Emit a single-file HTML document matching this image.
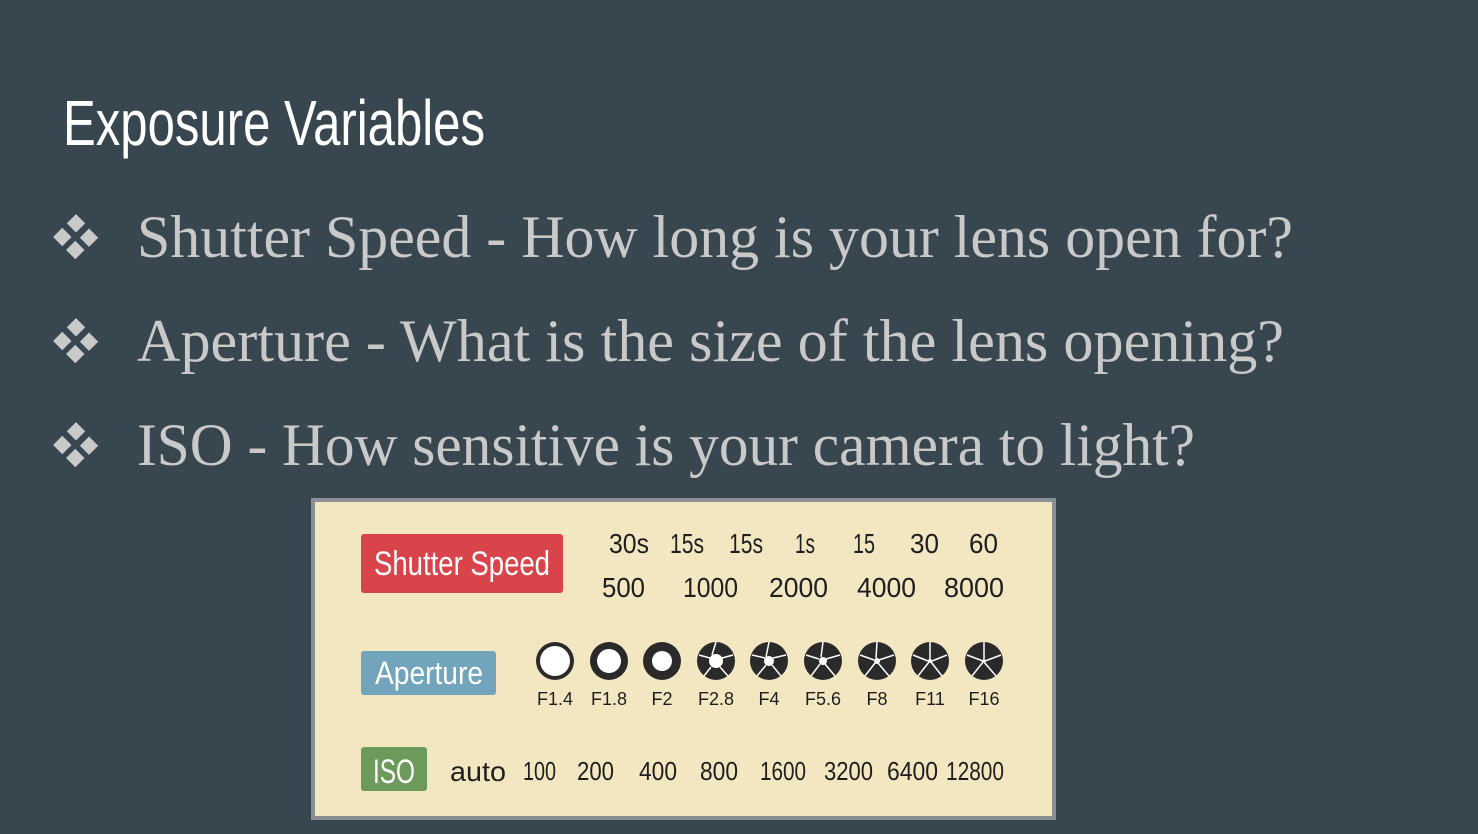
<!DOCTYPE html>
<html><head><meta charset="utf-8"><style>
body{margin:0;width:1478px;height:834px;background:#37464f;overflow:hidden;position:relative;font-family:"Liberation Sans",sans-serif}
.box{position:absolute;left:311px;top:498px;width:737px;height:314px;background:#f3e7c1;border:4px solid #8a8f91}
</style></head><body>
<svg width="1478" height="834" style="position:absolute;left:0;top:0">
<text x="63" y="145" font-family="Liberation Sans" font-size="64" fill="#fff" textLength="422" lengthAdjust="spacingAndGlyphs">Exposure Variables</text>
<g fill="#c9c9c9">
<g transform="translate(76,237)"><rect x="-7" y="-20" width="13" height="13" transform="rotate(45 0 -13)"/><rect x="-7" y="7" width="13" height="13" transform="rotate(45 0 13)"/><rect x="-20" y="-6" width="13" height="13" transform="rotate(45 -13 0)"/><rect x="7" y="-6" width="13" height="13" transform="rotate(45 13 0)"/></g>
<g transform="translate(76,341)"><rect x="-7" y="-20" width="13" height="13" transform="rotate(45 0 -13)"/><rect x="-7" y="7" width="13" height="13" transform="rotate(45 0 13)"/><rect x="-20" y="-6" width="13" height="13" transform="rotate(45 -13 0)"/><rect x="7" y="-6" width="13" height="13" transform="rotate(45 13 0)"/></g>
<g transform="translate(76,445)"><rect x="-7" y="-20" width="13" height="13" transform="rotate(45 0 -13)"/><rect x="-7" y="7" width="13" height="13" transform="rotate(45 0 13)"/><rect x="-20" y="-6" width="13" height="13" transform="rotate(45 -13 0)"/><rect x="7" y="-6" width="13" height="13" transform="rotate(45 13 0)"/></g>
<g font-family="Liberation Serif" font-size="60">
<text x="137" y="257" textLength="1156" lengthAdjust="spacingAndGlyphs">Shutter Speed - How long is your lens open for?</text>
<text x="137" y="361" textLength="1147" lengthAdjust="spacingAndGlyphs">Aperture - What is the size of the lens opening?</text>
<text x="137" y="465" textLength="1058" lengthAdjust="spacingAndGlyphs">ISO - How sensitive is your camera to light?</text>
</g></g>
</svg>
<div class="box"></div>
<svg width="1478" height="834" style="position:absolute;left:0;top:0">
<rect x="361" y="534" width="202" height="59" rx="3" fill="#d8444a"/>
<text x="374" y="575" font-family="Liberation Sans" font-size="34" fill="#fff" textLength="176" lengthAdjust="spacingAndGlyphs">Shutter Speed</text>
<rect x="361" y="651" width="135" height="44" rx="3" fill="#72a4bb"/>
<text x="375" y="684" font-family="Liberation Sans" font-size="32" fill="#fff" textLength="108" lengthAdjust="spacingAndGlyphs">Aperture</text>
<rect x="361" y="747" width="66" height="44" rx="3" fill="#6c9a5a"/>
<text x="373" y="783" font-family="Liberation Sans" font-size="34" fill="#fff" textLength="42" lengthAdjust="spacingAndGlyphs">ISO</text>
<g font-family="Liberation Sans" fill="#1e1e1e" font-size="28">
<text x="609" y="553" textLength="40" lengthAdjust="spacingAndGlyphs">30s</text>
<text x="670" y="553" textLength="34" lengthAdjust="spacingAndGlyphs">15s</text>
<text x="729" y="553" textLength="34" lengthAdjust="spacingAndGlyphs">15s</text>
<text x="795" y="553" textLength="20" lengthAdjust="spacingAndGlyphs">1s</text>
<text x="853" y="553" textLength="22" lengthAdjust="spacingAndGlyphs">15</text>
<text x="910" y="553" textLength="29" lengthAdjust="spacingAndGlyphs">30</text>
<text x="969" y="553" textLength="29" lengthAdjust="spacingAndGlyphs">60</text>
<text x="602" y="597" textLength="43" lengthAdjust="spacingAndGlyphs">500</text>
<text x="683" y="597" textLength="55" lengthAdjust="spacingAndGlyphs">1000</text>
<text x="769" y="597" textLength="59" lengthAdjust="spacingAndGlyphs">2000</text>
<text x="857" y="597" textLength="59" lengthAdjust="spacingAndGlyphs">4000</text>
<text x="944" y="597" textLength="60" lengthAdjust="spacingAndGlyphs">8000</text>
<text x="450" y="781" textLength="56" lengthAdjust="spacingAndGlyphs">auto</text>
</g>
<g font-family="Liberation Sans" fill="#1e1e1e" font-size="26">
<text x="523" y="780" textLength="33" lengthAdjust="spacingAndGlyphs">100</text>
<text x="577" y="780" textLength="37" lengthAdjust="spacingAndGlyphs">200</text>
<text x="639" y="780" textLength="38" lengthAdjust="spacingAndGlyphs">400</text>
<text x="700" y="780" textLength="38" lengthAdjust="spacingAndGlyphs">800</text>
<text x="760" y="780" textLength="46" lengthAdjust="spacingAndGlyphs">1600</text>
<text x="824" y="780" textLength="49" lengthAdjust="spacingAndGlyphs">3200</text>
<text x="887" y="780" textLength="51" lengthAdjust="spacingAndGlyphs">6400</text>
<text x="946" y="780" textLength="58" lengthAdjust="spacingAndGlyphs">12800</text>
</g>
<g font-family="Liberation Sans" fill="#1e1e1e" font-size="18" text-anchor="middle">
<text x="555" y="705">F1.4</text><text x="609" y="705">F1.8</text><text x="662" y="705">F2</text><text x="716" y="705">F2.8</text><text x="769" y="705">F4</text><text x="823" y="705">F5.6</text><text x="877" y="705">F8</text><text x="930" y="705">F11</text><text x="984" y="705">F16</text>
</g>
<g fill="#2a2a2a">
<circle cx="555" cy="661" r="19"/><circle cx="609" cy="661" r="19"/><circle cx="662" cy="661" r="19"/><circle cx="716" cy="661" r="19"/><circle cx="769" cy="661" r="19"/><circle cx="823" cy="661" r="19"/><circle cx="877" cy="661" r="19"/><circle cx="930" cy="661" r="19"/><circle cx="984" cy="661" r="19"/>
</g>
<g fill="#fff">
<circle cx="555" cy="661" r="15"/><circle cx="609" cy="661" r="12"/><circle cx="662" cy="661" r="10"/><circle cx="716" cy="661" r="7"/><circle cx="769" cy="661" r="5"/><circle cx="823" cy="661" r="4"/><circle cx="877" cy="661" r="3"/><circle cx="930" cy="661" r="2"/><circle cx="984" cy="661" r="1.5"/>
</g>
<g stroke="#fff" stroke-width="1.5" fill="none">
<path d="M716 642 L712 655 M733 655 L722 658 M728 676 L720 667 M704 676 L711 667 M699 655 L710 658"/>
<path d="M769 642 L766 657 M786 655 L773 658 M781 676 L772 665 M757 676 L766 665 M752 655 L765 658"/>
<path d="M823 642 L821 657 M840 655 L826 659 M835 676 L825 664 M811 676 L820 664 M806 655 L819 659"/>
<path d="M877 642 L876 658 M894 655 L879 660 M889 676 L878 663 M865 676 L875 663 M860 655 L874 660"/>
<path d="M930 642 L930 659 M947 655 L932 661 M942 676 L931 662 M918 676 L929 662 M913 655 L928 661"/>
<path d="M984 642 L984 660 M1001 655 L985 661 M996 676 L984 662 M972 676 L983 662 M967 655 L983 661"/>
</g>
</svg>
</body></html>
